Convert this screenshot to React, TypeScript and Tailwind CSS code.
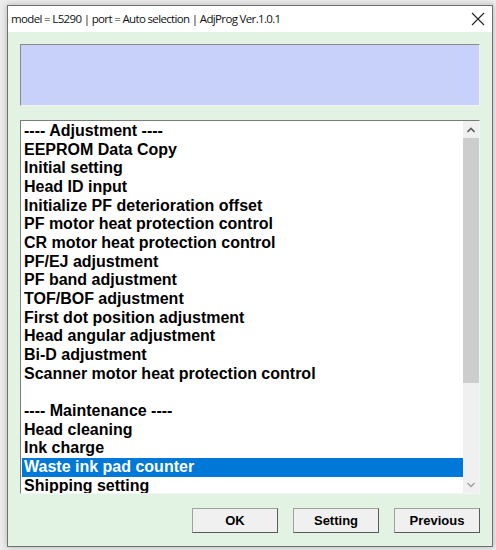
const items = [
  "---- Adjustment ----",
  "EEPROM Data Copy",
  "Initial setting",
  "Head ID input",
  "Initialize PF deterioration offset",
  "PF motor heat protection control",
  "CR motor heat protection control",
  "PF/EJ adjustment",
  "PF band adjustment",
  "TOF/BOF adjustment",
  "First dot position adjustment",
  "Head angular adjustment",
  "Bi-D adjustment",
  "Scanner motor heat protection control",
  "",
  "---- Maintenance ----",
  "Head cleaning",
  "Ink charge",
  "Waste ink pad counter",
  "Shipping setting",
];

const selected = 18;

function Button({ label }: { label: string }) {
  return (
    <button className="w-[86px] h-[25px] bg-[#f0f0f0] border border-t-[#a0a0a0] border-l-[#a0a0a0] border-r-[#5a5a5a] border-b-[#5a5a5a] text-[13px] font-bold text-black font-['Liberation_Sans',Arial,sans-serif]">
      {label}
    </button>
  );
}

export default function App() {
  return (
    <div className="w-[496px] h-[550px] bg-[#ececec] overflow-hidden pt-[5px] pl-[7px] font-['Liberation_Sans',Arial,sans-serif]">
      {/* dialog window */}
      <div className="w-[486px] h-[542px] flex flex-col border border-[#707070] shadow-[0_0_6px_rgba(0,0,0,0.25)] bg-[#e3f3e3]">
        {/* title bar */}
        <div className="h-[26px] bg-white flex items-center justify-between pl-[3px] pr-[7px] shrink-0">
          <span className="text-[11.5px] text-[#111] font-['Open_Sans',sans-serif] tracking-[-0.65px]">
            model = L5290 | port = Auto selection | AdjProg Ver.1.0.1
          </span>
          <svg width="14" height="14" viewBox="0 0 14 14" className="text-[#222]">
            <path d="M1 1L13 13M13 1L1 13" stroke="currentColor" strokeWidth="1.1" />
          </svg>
        </div>

        {/* client area */}
        <div className="flex-1 flex flex-col pt-[12px] pl-[12px] pr-[12px]">
          <div className="h-[62px] bg-[#c8d1fa] border border-t-[#8a8a8a] border-l-[#8a8a8a] border-r-[#f4f4f4] border-b-[#f4f4f4]" />

          {/* list box */}
          <div className="mt-[14px] h-[374px] bg-white border border-t-[#7a7a7a] border-l-[#7a7a7a] border-r-[#f4f4f4] border-b-[#f4f4f4] flex overflow-hidden">
            <div className="flex-1 pl-[1px] pt-[1px] overflow-hidden">
              {items.map((item, i) => (
                <div
                  key={i}
                  className={
                    i === selected
                      ? "h-[18.68px] leading-[18.68px] pl-[2px] text-[16px] font-bold whitespace-nowrap bg-[#0078d7] text-white"
                      : "h-[18.68px] leading-[18.68px] pl-[2px] text-[16px] font-bold whitespace-nowrap text-black"
                  }
                >
                  {item}
                </div>
              ))}
            </div>

            {/* scrollbar */}
            <div className="w-[16px] bg-[#f0f0f0] flex flex-col shrink-0">
              <div className="h-[17px] flex items-center justify-center">
                <svg width="8" height="6" viewBox="0 0 8 6">
                  <path d="M0.5 5L4 1.5L7.5 5" stroke="#606060" strokeWidth="1.6" fill="none" />
                </svg>
              </div>
              <div className="h-[245px] bg-[#cdcdcd]" />
              <div className="flex-1" />
              <div className="h-[17px] flex items-center justify-center">
                <svg width="8" height="6" viewBox="0 0 8 6">
                  <path d="M0.5 1L4 4.5L7.5 1" stroke="#a0a0a0" strokeWidth="1.4" fill="none" />
                </svg>
              </div>
            </div>
          </div>

          {/* buttons */}
          <div className="mt-[14px] flex justify-end gap-[15px]">
            <Button label="OK" />
            <Button label="Setting" />
            <Button label="Previous" />
          </div>
        </div>
      </div>
    </div>
  );
}
